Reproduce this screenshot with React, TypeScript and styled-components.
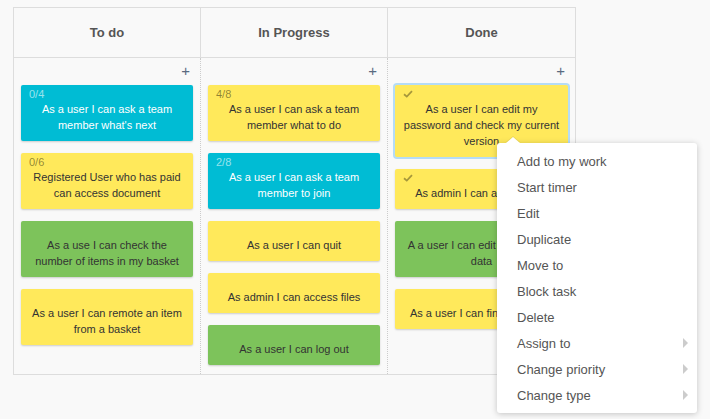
import React from "react";
import styled, { createGlobalStyle } from "styled-components";

const Global = createGlobalStyle`
  html, body { margin: 0; padding: 0; background: #f9f9f9; }
  body { font-family: "Liberation Sans", Arial, sans-serif; }
`;

type Tone = "cyan" | "yellow" | "green";

const bg: Record<Tone, string> = {
  cyan: "#00bcd4",
  yellow: "#ffe95b",
  green: "#7dc35b",
};

const Page = styled.div`
  position: relative;
  width: 710px;
  height: 419px;
  padding: 7px 13px;
  box-sizing: border-box;
`;

const Board = styled.div`
  width: 563px;
  border: 1px solid #dddddd;
  box-sizing: border-box;
  display: flex;
  flex-direction: column;
`;

const HeaderRow = styled.div`
  display: grid;
  grid-template-columns: 187px 187px 187px;
  height: 50px;
  border-bottom: 1px solid #dddddd;
  box-sizing: border-box;
`;

const HeaderCell = styled.div<{ $last?: boolean }>`
  display: flex;
  align-items: center;
  justify-content: center;
  font-size: 13px;
  font-weight: bold;
  color: #555555;
  border-right: ${(p) => (p.$last ? "none" : "1px solid #dddddd")};
`;

const BodyRow = styled.div`
  display: grid;
  grid-template-columns: 187px 187px 187px;
`;

const Column = styled.div<{ $last?: boolean }>`
  display: flex;
  flex-direction: column;
  gap: 12px;
  padding: 0 7px 9px 7px;
  border-right: ${(p) => (p.$last ? "none" : "1px dotted #cccccc")};
  box-sizing: border-box;
`;

const AddRow = styled.div`
  height: 25px;
  display: flex;
  justify-content: flex-end;
  align-items: center;
  padding-right: 3px;
  color: #5a6a80;
  font-size: 15px;
  line-height: 24px;
  margin-bottom: -10px;
`;

const Card = styled.div<{ $tone: Tone; $selected?: boolean }>`
  background: ${(p) => bg[p.$tone]};
  color: ${(p) => (p.$tone === "cyan" ? "#ffffff" : "#333333")};
  border-radius: 2px;
  box-shadow: ${(p) =>
    p.$selected
      ? "0 0 0 2px #b5dcf6"
      : "0 1px 2px rgba(0, 0, 0, 0.18)"};
  padding: 2px 8px 8px 8px;
  font-size: 11px;
  line-height: 16px;
  text-align: center;
`;

const CardHead = styled.div`
  height: 14px;
  display: flex;
  align-items: center;
  text-align: left;
`;

const Counter = styled.span<{ $tone: Tone }>`
  font-size: 11px;
  line-height: 12px;
  color: ${(p) =>
    p.$tone === "cyan" ? "rgba(255,255,255,0.6)" : "rgba(0,0,0,0.45)"};
`;

const Check = () => (
  <svg width="10" height="8" viewBox="0 0 10 8">
    <path
      d="M1 4.2 L3.8 6.6 L9 1.2"
      fill="none"
      stroke="rgba(0,0,0,0.35)"
      strokeWidth="1.8"
    />
  </svg>
);

const Menu = styled.div`
  position: absolute;
  left: 497px;
  top: 143px;
  width: 200px;
  background: #ffffff;
  border-radius: 3px;
  box-shadow: 0 1px 6px rgba(0, 0, 0, 0.22);
  padding: 5px 0;
  box-sizing: border-box;
`;

const MenuArrow = styled.div`
  position: absolute;
  left: 9px;
  top: -6px;
  width: 0;
  height: 0;
  border-left: 7px solid transparent;
  border-right: 7px solid transparent;
  border-bottom: 6px solid #ffffff;
  filter: drop-shadow(0 -1px 0 rgba(0, 0, 0, 0.08));
`;

const MenuItem = styled.div`
  height: 26px;
  display: flex;
  align-items: center;
  justify-content: space-between;
  padding: 0 9px 0 20px;
  font-size: 13px;
  color: #555555;
`;

const SubArrow = styled.span`
  width: 0;
  height: 0;
  border-top: 5px solid transparent;
  border-bottom: 5px solid transparent;
  border-left: 5px solid #cccccc;
`;

type CardData = {
  text: React.ReactNode;
  tone: Tone;
  counter?: string;
  check?: boolean;
  selected?: boolean;
};

const columns: { title: string; cards: CardData[] }[] = [
  {
    title: "To do",
    cards: [
      { text: <>As a user I can ask a team<br />member what's next</>, tone: "cyan", counter: "0/4" },
      { text: <>Registered User who has paid<br />can access document</>, tone: "yellow", counter: "0/6" },
      { text: <>As a use I can check the<br />number of items in my basket</>, tone: "green" },
      { text: <>As a user I can remote an item<br />from a basket</>, tone: "yellow" },
    ],
  },
  {
    title: "In Progress",
    cards: [
      { text: <>As a user I can ask a team<br />member what to do</>, tone: "yellow", counter: "4/8" },
      { text: <>As a user I can ask a team<br />member to join</>, tone: "cyan", counter: "2/8" },
      { text: "As a user I can quit", tone: "yellow" },
      { text: "As admin I can access files", tone: "yellow" },
      { text: "As a user I can log out", tone: "green" },
    ],
  },
  {
    title: "Done",
    cards: [
      { text: <>As a user I can edit my<br />password and check my current<br />version</>, tone: "yellow", check: true, selected: true },
      { text: "As admin I can access files", tone: "yellow", check: true },
      { text: <>A a user I can edit my account<br />data</>, tone: "green" },
      { text: "As a user I can find a product", tone: "yellow" },
    ],
  },
];

const menuItems: { label: string; sub?: boolean }[] = [
  { label: "Add to my work" },
  { label: "Start timer" },
  { label: "Edit" },
  { label: "Duplicate" },
  { label: "Move to" },
  { label: "Block task" },
  { label: "Delete" },
  { label: "Assign to", sub: true },
  { label: "Change priority", sub: true },
  { label: "Change type", sub: true },
];

export default function App() {
  return (
    <>
      <Global />
      <Page>
        <Board>
          <HeaderRow>
            {columns.map((c, i) => (
              <HeaderCell key={c.title} $last={i === columns.length - 1}>
                {c.title}
              </HeaderCell>
            ))}
          </HeaderRow>
          <BodyRow>
            {columns.map((c, i) => (
              <Column key={c.title} $last={i === columns.length - 1}>
                <AddRow>+</AddRow>
                {c.cards.map((card, j) => (
                  <Card key={j} $tone={card.tone} $selected={card.selected}>
                    <CardHead>
                      {card.counter && <Counter $tone={card.tone}>{card.counter}</Counter>}
                      {card.check && <Check />}
                    </CardHead>
                    {card.text}
                  </Card>
                ))}
              </Column>
            ))}
          </BodyRow>
        </Board>
        <Menu>
          <MenuArrow />
          {menuItems.map((m) => (
            <MenuItem key={m.label}>
              {m.label}
              {m.sub && <SubArrow />}
            </MenuItem>
          ))}
        </Menu>
      </Page>
    </>
  );
}
